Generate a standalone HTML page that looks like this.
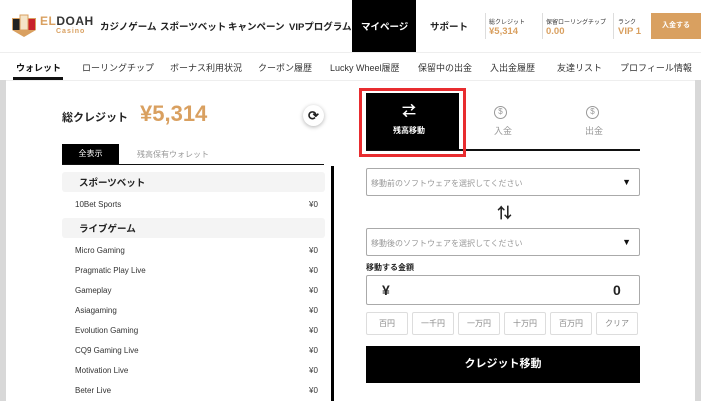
<!DOCTYPE html>
<html><head><meta charset="utf-8"><style>
*{margin:0;padding:0;box-sizing:border-box}
body{width:701px;height:401px;overflow:hidden;background:#fff;font-family:"Liberation Sans","Noto Sans CJK JP",sans-serif;position:relative;color:#222}
.a{position:absolute;white-space:nowrap}
.nav{font-size:9.5px;font-weight:bold;top:19px}
.sub{font-size:9px;top:61px;color:#333}
.st{font-size:6px;color:#333;top:17px}
.sv{font-size:9.5px;color:#d9a060;font-weight:bold;top:26px}
.row{font-size:8px;left:75px;color:#333}
.yen{font-size:8px;left:309px;color:#333}
.hd{position:absolute;left:62px;width:263px;height:20px;background:#f4f4f4;border-radius:3px;font-size:9.5px;font-weight:bold;padding:3px 0 0 17px}
.sel{position:absolute;left:366px;width:274px;height:28px;border:1px solid #aaa;border-radius:2px;font-size:8px;color:#999;padding:9px 0 0 4px}
.sel b{position:absolute;right:8px;top:8px;color:#111;font-size:9px}
.btn{position:absolute;top:312px;width:42px;height:23px;border:1px solid #ddd;border-radius:2px;font-size:8px;color:#888;text-align:center;line-height:21px}
</style></head><body>
<svg class="a" style="left:11px;top:12px" width="26" height="26" viewBox="0 0 26 26"><path d="M1 6h24v12l-12 7L1 18z" fill="#d9a060"/><rect x="2" y="7" width="7" height="11" fill="#222"/><rect x="17" y="7" width="7" height="11" fill="#c8232b"/><rect x="9" y="3" width="8" height="15" fill="#f5e4c8" stroke="#d9a060"/></svg>
<div class="a" style="left:40px;top:14px;font-size:12px;font-weight:bold;color:#d9a060;letter-spacing:0.5px">EL<span style="color:#333">DOAH</span></div>
<div class="a" style="left:56px;top:28px;font-size:7px;font-weight:bold;color:#d9a060;letter-spacing:1px">Casino</div>
<div class="a nav" style="left:100px">カジノゲーム</div>
<div class="a nav" style="left:160px">スポーツベット</div>
<div class="a nav" style="left:228px">キャンペーン</div>
<div class="a nav" style="left:289px">VIPプログラム</div>
<div class="a" style="left:352px;top:0;width:64px;height:52px;background:#000"></div>
<div class="a nav" style="left:361px;color:#fff">マイページ</div>
<div class="a nav" style="left:430px">サポート</div>
<div class="a" style="left:485px;top:13px;width:1px;height:26px;background:#ddd"></div>
<div class="a" style="left:542px;top:13px;width:1px;height:26px;background:#ddd"></div>
<div class="a" style="left:613px;top:13px;width:1px;height:26px;background:#ddd"></div>
<div class="a st" style="left:489px">総クレジット</div><div class="a sv" style="left:489px">¥5,314</div>
<div class="a st" style="left:546px">保留ローリングチップ</div><div class="a sv" style="left:546px">0.00</div>
<div class="a st" style="left:618px">ランク</div><div class="a sv" style="left:618px">VIP 1</div>
<div class="a" style="left:651px;top:13px;width:50px;height:26px;background:#d9a060;color:#fff;font-size:7px;font-weight:bold;text-align:center;line-height:26px">入金する</div>
<div class="a" style="left:0;top:52px;width:701px;height:1px;background:#eee"></div>
<div class="a sub" style="left:16px;font-weight:bold;color:#111">ウォレット</div>
<div class="a" style="left:13px;top:77px;width:50px;height:3px;background:#111"></div>
<div class="a sub" style="left:82px">ローリングチップ</div>
<div class="a sub" style="left:170px">ボーナス利用状況</div>
<div class="a sub" style="left:258px">クーポン履歴</div>
<div class="a sub" style="left:330px">Lucky Wheel履歴</div>
<div class="a sub" style="left:418px">保留中の出金</div>
<div class="a sub" style="left:490px">入出金履歴</div>
<div class="a sub" style="left:557px">友達リスト</div>
<div class="a sub" style="left:620px">プロフィール情報</div>
<div class="a" style="left:0;top:80px;width:701px;height:1px;background:#eee"></div>
<div class="a" style="left:0;top:80px;width:6px;height:321px;background:#d8d8d8"></div>
<div class="a" style="left:695px;top:80px;width:6px;height:321px;background:#d8d8d8"></div>
<div class="a" style="left:62px;top:109px;font-size:11px;font-weight:bold">総クレジット</div>
<div class="a" style="left:140px;top:101px;font-size:22px;font-weight:bold;color:#d9a060">¥5,314</div>
<div class="a" style="left:303px;top:105px;width:21px;height:21px;border-radius:50%;background:#fff;box-shadow:0 1px 4px rgba(0,0,0,.3);text-align:center;line-height:21px;font-size:13px;font-weight:bold">⟳</div>
<div class="a" style="left:62px;top:144px;width:57px;height:20px;background:#000;color:#fff;font-size:8px;text-align:center;line-height:20px">全表示</div>
<div class="a" style="left:137px;top:149px;font-size:8px;color:#999">残高保有ウォレット</div>
<div class="a" style="left:62px;top:164px;width:262px;height:1px;background:#111"></div>
<div class="a" style="left:331px;top:166px;width:3px;height:235px;background:#000"></div>
<div class="hd" style="top:172px">スポーツベット</div>
<div class="a row" style="top:200px">10Bet Sports</div><div class="a yen" style="top:200px">¥0</div>
<div class="hd" style="top:218px">ライブゲーム</div>
<div class="a row" style="top:246px">Micro Gaming</div><div class="a yen" style="top:246px">¥0</div>
<div class="a row" style="top:266px">Pragmatic Play Live</div><div class="a yen" style="top:266px">¥0</div>
<div class="a row" style="top:286px">Gameplay</div><div class="a yen" style="top:286px">¥0</div>
<div class="a row" style="top:306px">Asiagaming</div><div class="a yen" style="top:306px">¥0</div>
<div class="a row" style="top:326px">Evolution Gaming</div><div class="a yen" style="top:326px">¥0</div>
<div class="a row" style="top:346px">CQ9 Gaming Live</div><div class="a yen" style="top:346px">¥0</div>
<div class="a row" style="top:366px">Motivation Live</div><div class="a yen" style="top:366px">¥0</div>
<div class="a row" style="top:386px">Beter Live</div><div class="a yen" style="top:386px">¥0</div>
<div class="a" style="left:366px;top:149px;width:274px;height:2px;background:#111"></div>
<div class="a" style="left:366px;top:93px;width:93px;height:57px;background:#000"></div>
<div class="a" style="left:359px;top:88px;width:107px;height:69px;border:3px solid #e82c2f"></div>
<div class="a" style="left:402px;top:101px;color:#fff;font-size:14px;font-weight:bold">⇄</div>
<div class="a" style="left:393px;top:125px;color:#fff;font-size:8px;font-weight:bold">残高移動</div>
<div class="a" style="left:494px;top:106px;width:13px;height:13px;border:1.5px solid #999;border-radius:50%;font-size:8px;color:#999;text-align:center;line-height:10px">$</div>
<div class="a" style="left:494px;top:124px;font-size:9px;color:#999">入金</div>
<div class="a" style="left:586px;top:106px;width:13px;height:13px;border:1.5px solid #999;border-radius:50%;font-size:8px;color:#999;text-align:center;line-height:10px">$</div>
<div class="a" style="left:585px;top:124px;font-size:9px;color:#999">出金</div>
<div class="sel" style="top:168px">移動前のソフトウェアを選択してください<b>▼</b></div>
<div class="a" style="left:497px;top:202px;font-size:15px;font-weight:bold">⇅</div>
<div class="sel" style="top:228px">移動後のソフトウェアを選択してください<b>▼</b></div>
<div class="a" style="left:366px;top:262px;font-size:8px;font-weight:bold">移動する金額</div>
<div class="a" style="left:366px;top:275px;width:274px;height:30px;border:1px solid #aaa;border-radius:2px"></div>
<div class="a" style="left:382px;top:282px;font-size:14px;font-weight:bold">¥</div>
<div class="a" style="left:613px;top:282px;font-size:14px;font-weight:bold">0</div>
<div class="btn" style="left:366px">百円</div>
<div class="btn" style="left:412px">一千円</div>
<div class="btn" style="left:458px">一万円</div>
<div class="btn" style="left:504px">十万円</div>
<div class="btn" style="left:550px">百万円</div>
<div class="btn" style="left:596px">クリア</div>
<div class="a" style="left:366px;top:346px;width:274px;height:37px;background:#000;color:#fff;font-size:11px;font-weight:bold;text-align:center;line-height:37px">クレジット移動</div>
</body></html>
